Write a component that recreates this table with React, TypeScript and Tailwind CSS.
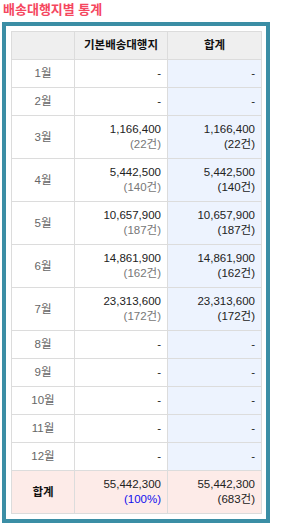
type Row = { month: string; amount?: string; count?: string };

const rows: Row[] = [
  { month: "1월" },
  { month: "2월" },
  { month: "3월", amount: "1,166,400", count: "22" },
  { month: "4월", amount: "5,442,500", count: "140" },
  { month: "5월", amount: "10,657,900", count: "187" },
  { month: "6월", amount: "14,861,900", count: "162" },
  { month: "7월", amount: "23,313,600", count: "172" },
  { month: "8월" },
  { month: "9월" },
  { month: "10월" },
  { month: "11월" },
  { month: "12월" },
];

const cell = "border border-[#dcdcdc] px-[6px] py-[6px] leading-[15px]";

export default function App() {
  return (
    <div
      className="w-[287px] h-[531px] bg-white text-[11.5px] text-[#222]"
      style={{ fontFamily: '"Liberation Sans", "Noto Sans CJK KR", sans-serif' }}
    >
      <h3 className="pl-[3px] h-[22px] leading-[19px] text-[13px] font-bold text-[#f5475f]">
        배송대행지별 통계
      </h3>

      <div className="ml-[2px] w-[268px] border-4 border-[#3b8ea5] p-[5px]">
        <table className="w-[250px] table-fixed border-collapse">
          <colgroup>
            <col className="w-[63px]" />
            <col className="w-[93px]" />
            <col className="w-[94px]" />
          </colgroup>
          <thead>
            <tr className="bg-[#efefef]">
              <th className={cell}></th>
              <th className={`${cell} font-bold text-center text-[#111]`}>기본배송대행지</th>
              <th className={`${cell} font-bold text-center text-[#111]`}>합계</th>
            </tr>
          </thead>
          <tbody>
            {rows.map((r) => (
              <tr key={r.month}>
                <td className={`${cell} text-center text-[#666]`}>{r.month}</td>
                <td className={`${cell} text-right`}>
                  {r.amount ? (
                    <>
                      <div>{r.amount}</div>
                      <div className="text-[#777]">({r.count}건)</div>
                    </>
                  ) : (
                    "-"
                  )}
                </td>
                <td className={`${cell} text-right bg-[#edf3fe]`}>
                  {r.amount ? (
                    <>
                      <div>{r.amount}</div>
                      <div>({r.count}건)</div>
                    </>
                  ) : (
                    "-"
                  )}
                </td>
              </tr>
            ))}
            <tr className="bg-[#fdebe8]">
              <td className={`${cell} text-center font-bold text-[#111]`}>합계</td>
              <td className={`${cell} text-right`}>
                <div>55,442,300</div>
                <div className="text-[#1010ee]">(100%)</div>
              </td>
              <td className={`${cell} text-right`}>
                <div>55,442,300</div>
                <div>(683건)</div>
              </td>
            </tr>
          </tbody>
        </table>
      </div>
    </div>
  );
}
